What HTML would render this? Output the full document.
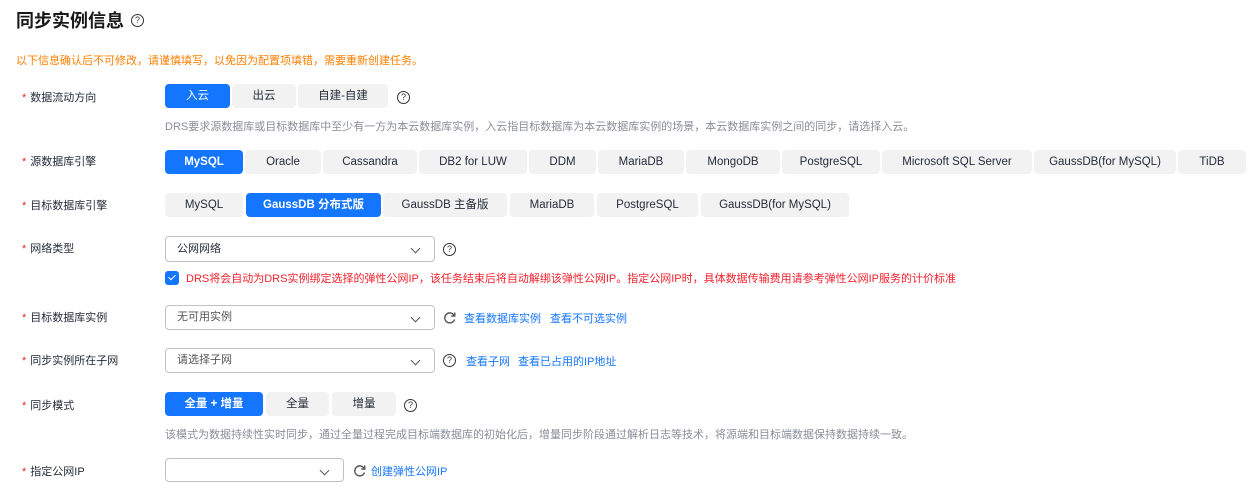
<!DOCTYPE html>
<html><head><meta charset="utf-8"><style>
*{box-sizing:border-box;margin:0;padding:0}
body{width:1253px;height:494px;background:#fff;font-family:"Liberation Sans","Noto Sans CJK SC",sans-serif;font-size:11px;color:#252b3a;position:relative;overflow:hidden}
.a{position:absolute;white-space:nowrap}
.t{left:16px;top:7px;font-size:18px;font-weight:bold;color:#191919}
.lbl{left:22px;font-size:11px;color:#252b3a}
.lbl b{color:#e6262c;font-weight:normal;margin-right:4px}
.btn{position:absolute;height:24px;line-height:24px;text-align:center;background:#f2f2f2;border-radius:4px;color:#252b3a;font-size:11.5px}
.on{background:#1476ff;color:#fff;font-weight:bold}
.sel{position:absolute;left:165px;border:1px solid #c1c1c1;border-radius:4px;background:#fff;padding-left:11px;color:#252b3a;font-size:11px}
.sel::after{content:"";position:absolute;right:15px;top:8px;width:6px;height:6px;border-right:1.3px solid #555;border-bottom:1.3px solid #555;transform:rotate(45deg)}
.q{position:absolute;width:13px;height:13px;border:1.2px solid #333;border-radius:50%;font-size:9px;line-height:11px;text-align:center;color:#333}
.hint{color:#8a8e99;font-size:11px}
.lk{color:#1476ff;font-size:11px}
svg.r{position:absolute}
</style></head><body>
<div class="a t">同步实例信息</div><div class="q" style="left:131px;top:14px">?</div>
<div class="a" style="left:16px;top:52px;color:#ff7f00;font-size:11px">以下信息确认后不可修改，请谨慎填写，以免因为配置项填错，需要重新创建任务。</div>

<div class="a lbl" style="top:89px"><b>*</b>数据流动方向</div>
<div class="btn on" style="left:165px;top:84px;width:65px;font-weight:normal">入云</div>
<div class="btn" style="left:232px;top:84px;width:64px">出云</div>
<div class="btn" style="left:298px;top:84px;width:90px">自建-自建</div>
<div class="q" style="left:397px;top:91px">?</div>
<div class="a hint" style="left:165px;top:118px">DRS要求源数据库或目标数据库中至少有一方为本云数据库实例，入云指目标数据库为本云数据库实例的场景，本云数据库实例之间的同步，请选择入云。</div>

<div class="a lbl" style="top:153px"><b>*</b>源数据库引擎</div>
<div class="btn on" style="left:165px;top:150px;width:78px">MySQL</div>
<div class="btn" style="left:245px;top:150px;width:76px">Oracle</div>
<div class="btn" style="left:323px;top:150px;width:94px">Cassandra</div>
<div class="btn" style="left:419px;top:150px;width:108px">DB2 for LUW</div>
<div class="btn" style="left:529px;top:150px;width:67px">DDM</div>
<div class="btn" style="left:598px;top:150px;width:86px">MariaDB</div>
<div class="btn" style="left:686px;top:150px;width:94px">MongoDB</div>
<div class="btn" style="left:782px;top:150px;width:98px">PostgreSQL</div>
<div class="btn" style="left:882px;top:150px;width:150px">Microsoft SQL Server</div>
<div class="btn" style="left:1034px;top:150px;width:142px">GaussDB(for MySQL)</div>
<div class="btn" style="left:1178px;top:150px;width:68px">TiDB</div>

<div class="a lbl" style="top:197px"><b>*</b>目标数据库引擎</div>
<div class="btn" style="left:165px;top:193px;width:78px">MySQL</div>
<div class="btn on" style="left:246px;top:193px;width:135px">GaussDB 分布式版</div>
<div class="btn" style="left:383px;top:193px;width:124px">GaussDB 主备版</div>
<div class="btn" style="left:510px;top:193px;width:84px">MariaDB</div>
<div class="btn" style="left:597px;top:193px;width:101px">PostgreSQL</div>
<div class="btn" style="left:701px;top:193px;width:148px">GaussDB(for MySQL)</div>

<div class="a lbl" style="top:240px"><b>*</b>网络类型</div>
<div class="sel" style="top:236px;width:270px;height:26px;line-height:24px">公网网络</div>
<div class="q" style="left:443px;top:243px">?</div>
<div class="a" style="left:165px;top:271px;width:14px;height:14px;background:#1476ff;border-radius:3px"></div>
<div class="a" style="left:170px;top:273px;width:4px;height:7px;border-right:1.6px solid #fff;border-bottom:1.6px solid #fff;transform:rotate(45deg)"></div>
<div class="a" style="left:186px;top:270px;color:#f5222d;font-size:11px">DRS将会自动为DRS实例绑定选择的弹性公网IP，该任务结束后将自动解绑该弹性公网IP。指定公网IP时，具体数据传输费用请参考弹性公网IP服务的计价标准</div>

<div class="a lbl" style="top:309px"><b>*</b>目标数据库实例</div>
<div class="sel" style="top:305px;width:270px;height:25px;line-height:23px;color:#555">无可用实例</div>
<svg class="r" style="left:443px;top:311px" width="13" height="13" viewBox="0 0 13 13"><path d="M11 4.2A5 5 0 1 0 11.5 8.5" fill="none" stroke="#555" stroke-width="1.4"/><path d="M11.8 1.5V5H8.3" fill="none" stroke="#555" stroke-width="1.4"/></svg>
<div class="a lk" style="left:464px;top:310px">查看数据库实例</div>
<div class="a lk" style="left:550px;top:310px">查看不可选实例</div>

<div class="a lbl" style="top:352px"><b>*</b>同步实例所在子网</div>
<div class="sel" style="top:348px;width:270px;height:25px;line-height:23px;color:#555">请选择子网</div>
<div class="q" style="left:443px;top:354px">?</div>
<div class="a lk" style="left:466px;top:353px">查看子网</div>
<div class="a lk" style="left:518px;top:353px">查看已占用的IP地址</div>

<div class="a lbl" style="top:397px"><b>*</b>同步模式</div>
<div class="btn on" style="left:165px;top:392px;width:98px">全量 + 增量</div>
<div class="btn" style="left:266px;top:392px;width:63px">全量</div>
<div class="btn" style="left:332px;top:392px;width:64px">增量</div>
<div class="q" style="left:404px;top:399px">?</div>
<div class="a hint" style="left:165px;top:426px">该模式为数据持续性实时同步，通过全量过程完成目标端数据库的初始化后，增量同步阶段通过解析日志等技术，将源端和目标端数据保持数据持续一致。</div>

<div class="a lbl" style="top:463px"><b>*</b>指定公网IP</div>
<div class="sel" style="top:458px;width:179px;height:24px"></div>
<svg class="r" style="left:353px;top:464px" width="13" height="13" viewBox="0 0 13 13"><path d="M11 4.2A5 5 0 1 0 11.5 8.5" fill="none" stroke="#555" stroke-width="1.4"/><path d="M11.8 1.5V5H8.3" fill="none" stroke="#555" stroke-width="1.4"/></svg>
<div class="a lk" style="left:371px;top:463px">创建弹性公网IP</div>
</body></html>
